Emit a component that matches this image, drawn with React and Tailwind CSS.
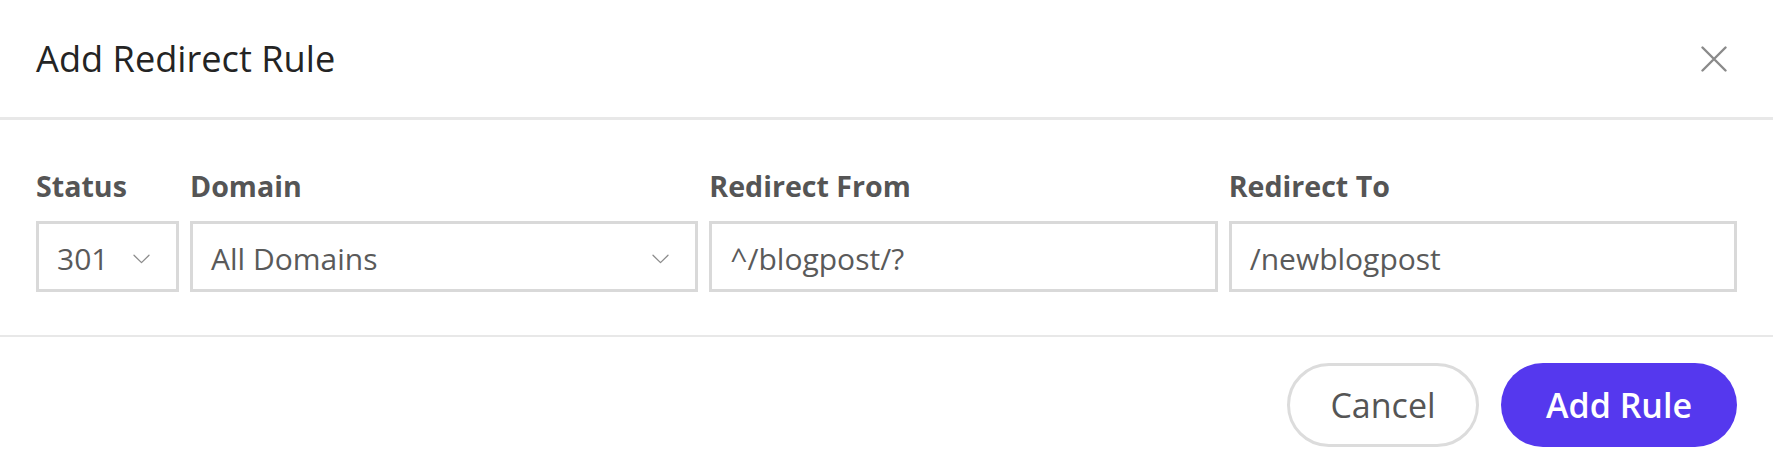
const font = { fontFamily: '"Open Sans", "Noto Sans", sans-serif' };

const Chevron = () => (
  <svg width="17" height="10" viewBox="0 0 17 10" fill="none" className="shrink-0">
    <path d="M1 1.2 L8.5 8.6 L16 1.2" stroke="#8c8c8c" strokeWidth="1.3" strokeLinecap="round" strokeLinejoin="round" />
  </svg>
);

const Field = ({ label, value, select, className }) => (
  <div className={`flex flex-col ${className}`}>
    <label className="text-[28.6px] font-bold leading-[28px] text-[#555] whitespace-nowrap">{label}</label>
    <div className="mt-[21px] flex h-[71px] items-center justify-between border-[3px] border-[#d9d9d9] bg-white pl-[18px] pr-[26px] pt-[4px]">
      <span className="text-[30px] leading-[30px] text-[#5a5a5a] whitespace-nowrap">{value}</span>
      {select && <Chevron />}
    </div>
  </div>
);

export default function App() {
  return (
    <div className="h-[466px] w-full bg-white" style={font}>
      <header className="flex h-[117px] items-center justify-between px-[36px]">
        <h1 className="text-[36.2px] leading-none text-[#242424]">Add Redirect Rule</h1>
        <button className="mr-[10px] flex items-center justify-center" aria-label="Close">
          <svg width="26" height="26" viewBox="0 0 26 26" fill="none">
            <path d="M1.5 1.5 L24.5 24.5 M24.5 1.5 L1.5 24.5" stroke="#8a8a8a" strokeWidth="2.4" strokeLinecap="round" />
          </svg>
        </button>
      </header>
      <div className="h-[3px] bg-[#e8e8e8]" />

      <section className="flex gap-[11px] px-[36px] pt-[52px] pb-[43px]">
        <Field label="Status" value="301" select className="w-[143px] shrink-0" />
        <Field label="Domain" value="All Domains" select className="min-w-0 flex-1" />
        <Field label="Redirect From" value="^/blogpost/?" className="min-w-0 flex-1" />
        <Field label="Redirect To" value="/newblogpost" className="min-w-0 flex-1" />
      </section>
      <div className="h-[2px] bg-[#e8e8e8]" />

      <footer className="flex justify-end gap-[22px] px-[36px] pt-[26px]">
        <button className="flex h-[84px] w-[192px] items-center justify-center rounded-full border-[3px] border-[#dcdcdc] bg-white text-[34px] text-[#555]">
          Cancel
        </button>
        <button className="flex h-[84px] w-[236px] items-center justify-center rounded-full bg-[#5538ee] text-[34px] font-semibold text-white">
          Add Rule
        </button>
      </footer>
    </div>
  );
}
